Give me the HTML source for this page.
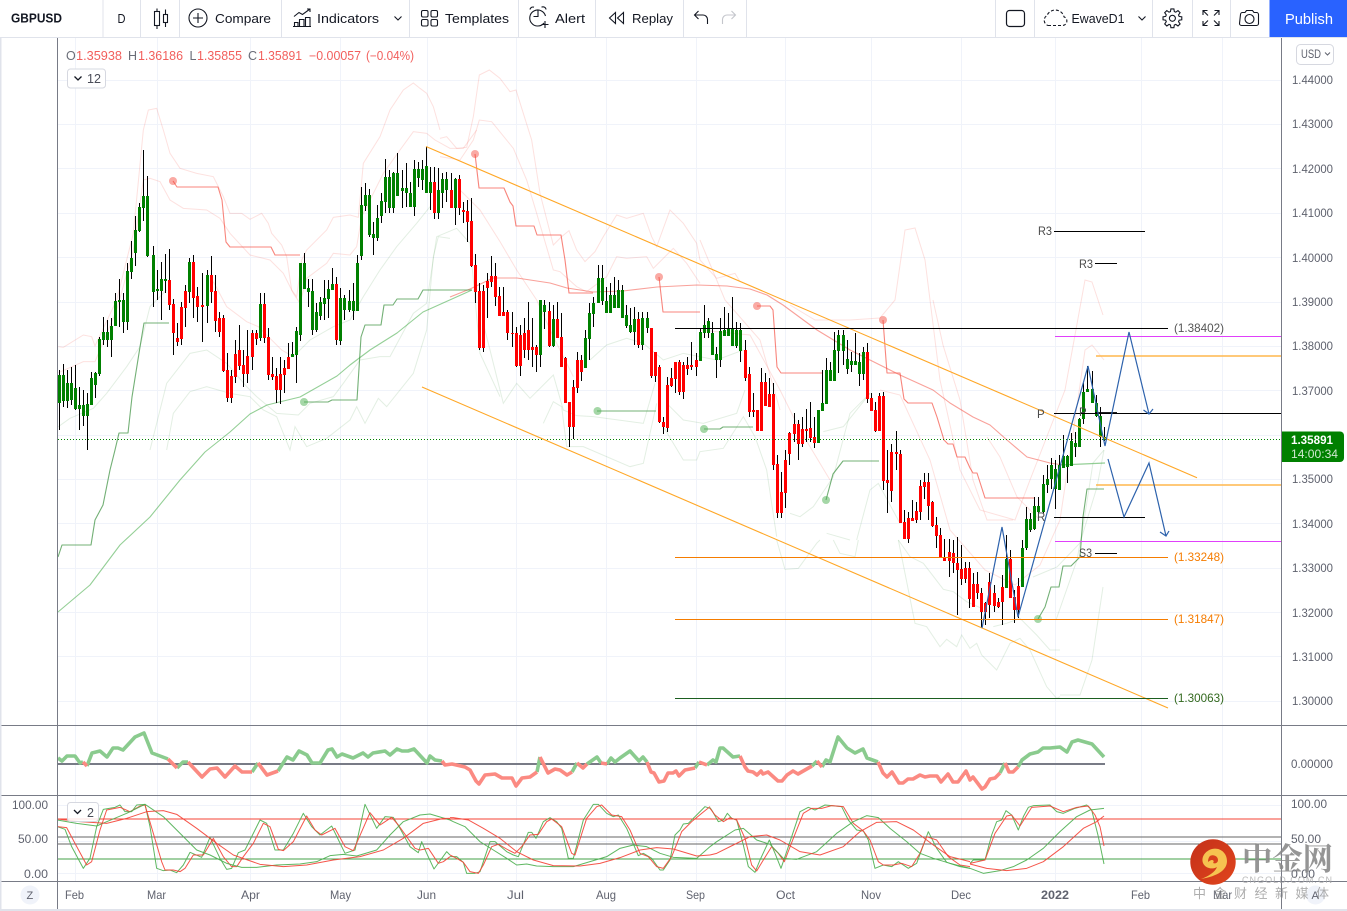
<!DOCTYPE html>
<html><head><meta charset="utf-8"><title>GBPUSD</title>
<style>
html,body{margin:0;padding:0;background:#fff;overflow:hidden}
svg{display:block}
text{font-family:"Liberation Sans","Noto Sans CJK SC",sans-serif}
.pr{fill:none;stroke:#f44336;stroke-opacity:.16;stroke-width:3}
.pg{fill:none;stroke:#388e3c;stroke-opacity:.14;stroke-width:3}
.ax{font-size:12px;fill:#5f626e}
.ic{fill:none;stroke:#131722;stroke-width:1.1}
.tb{font-size:13px;fill:#131722}
</style></head><body>
<svg width="1347" height="911" viewBox="0 0 1347 911" xmlns="http://www.w3.org/2000/svg">
<rect width="1347" height="911" fill="#fff"/>
<!-- grid -->
<path d="M58 80.5H1281M58 124.5H1281M58 168.5H1281M58 213.5H1281M58 257.5H1281M58 302.5H1281M58 346.5H1281M58 390.5H1281M58 435.5H1281M58 479.5H1281M58 523.5H1281M58 568.5H1281M58 612.5H1281M58 656.5H1281M58 701.5H1281M58 805.5H1281M58 841.5H1281M58 873.5H1281M75.5 38V881M157.5 38V881M250.5 38V881M340.5 38V881M427.5 38V881M516.5 38V881M606.5 38V881M696.5 38V881M785.5 38V881M871.5 38V881M961.5 38V881M1055.5 38V881M1141.5 38V881M1222.5 38V881" stroke="#f0f3fa" fill="none"/>
<!-- pale bands -->
<g transform="translate(50 130) scale(.33333)">
<path class="pr" d="M25 650L40 652 100 615 125 620 135 648 200 510 250 310 280 0 295-60 320-65 340 0 360 70 390 115 440 130 490 140 520 200 540 250 575 250 600 268 635 250 655 280 665 310 695 345 710 380 725 480 740 500 755 390 770 360 830 300 850 262 900 255 925 262 940 100 990 20 1020-60 1060-120 1090-141 1110-125 1130-110 1150-70 1170 0"/>
<path class="pr" d="M25 728L100 695 135 695 200 540 250 360 280 150 300 145 330 155 360 210 400 235 470 240 510 265 540 310 600 375 660 390 700 430 730 490 750 520 770 445 830 400 850 370 900 375 920 350 935 260 1000 130 1050 60 1090 5 1130 10 1155 30 1200 55 1240 55 1280 0"/>
<path class="pr" d="M490 455L530 530 590 575 625 590 660 625 695 660 730 680"/>
<path class="pg" d="M25 890L60 865 130 835 170 790 230 710 270 650 300 530 350 480"/>
<path class="pg" d="M730 680L780 630 850 590 900 570 940 500 990 420 1040 350 1100 280 1140 230"/>
<path class="pg" d="M300 960L350 760 420 670 470 660 530 700 590 770 620 800 680 850 745 855 780 820 850 800 880 760 930 690 990 680 1020 680 1090 550 1130 520 1160 320 1220 295 1260 340 1290 670 1350 800"/>
<path class="pg" d="M350 960L370 850 420 785 470 770 540 790 600 800 640 840 680 860 720 960 735 890 770 950 830 925 900 870 920 830 945 880 985 805 1010 830 1090 730 1130 600 1150 380 1165 320 1200 325"/>
</g>
<g transform="translate(440 60) scale(.33333)">
<path class="pr" d="M0 235L20 230 50 265 80 262 100 170 118 45 148 30 180 55 210 95 228 90 275 240 300 400 340 555 365 530 387 512 410 570 435 605 465 575 490 530 530 465 560 475 610 460 635 530 650 560 690 450 730 490 770 550 780 600 830 655 885 640 900 665"/>
<path class="pr" d="M0 290L60 300 100 240 118 180 155 185 220 265 260 360 290 460 340 630 360 635 410 680 440 695 500 650 530 590 560 595 620 590 640 625 700 565 740 610 780 670"/>
<path class="pr" d="M60 390L120 450 180 545 230 630 290 720 340 830 400 950"/>
</g>
<g fill="none" stroke="#f44336" stroke-opacity=".16">
<path d="M700 240L725 300 760 340 780 410"/>
<path d="M700 330L750 335 780 390 800 430 830 480"/>
<path d="M790 305L815 320 850 320 880 318 895 300 905 230 915 228 925 260 940 380 960 470 980 510 1015 520 1030 480 1065 390 1085 280 1092 282 1103 315"/>
<path d="M880 390L900 395 930 460 950 530 985 570 1015 585 1040 565 1060 520 1075 420 1085 350 1092 345 1104 360"/>
<path d="M933 300L943 345 960 400 973 480 987 520 1013 520M987 437L1000 457 1017 497 1040 520"/>
</g>
<g transform="translate(450 250) scale(.33333)">
<path class="pg" d="M100 220L160 460 200 400 240 445 310 375 340 480 380 497 430 500 580 520 615 400"/>
<path class="pg" d="M420 330L470 285 530 265 580 280 640 330 700 310 800 330 880 300"/>
<path class="pg" d="M650 460L700 510 760 520 860 490 885 420"/>
<path class="pg" d="M280 520L310 455 335 470 350 590 400 590 540 650 580 640 620 460"/>
<path class="pg" d="M640 530L700 630 740 630 750 605 820 595 880 500 915 560 950 660 980 860"/>
<path class="pg" d="M1020 790L1050 800 1090 770 1150 680 1200 490 1260 430"/>
<path class="pg" d="M1120 545L1180 530 1260 430"/>
<path class="pg" d="M1130 850L1200 870M1220 870L1260 720 1285 700 1350 820"/>
</g>
<g transform="translate(660 540) scale(.33333)">
<path class="pg" d="M350 0L375 88 415 85 470 10 480 0M520 0L540 40 585 50 595 0"/>
<path class="pg" d="M715 0L750 50 790 70 850 148 880 155 920 185 965 205"/>
<path class="pg" d="M715 0L765 250 800 260 840 320 860 298 890 320 905 285 930 325 950 310 965 345 1010 390 1050 310 1080 295 1110 330 1160 440 1190 475 1200 470"/>
<path class="pg" d="M1000 260L1040 250 1080 235 1130 285 1170 330 1200 330"/>
</g>
<g fill="none" stroke="#388e3c" stroke-opacity=".14">
<path d="M1033 577L1057 567 1080 543 1097 487 1104 450"/>
<path d="M1060 695L1080 695 1092 660 1103 587"/>
<path d="M1056 620L1077 560 1083 527 1093 463 1104 450"/>
</g>
<!-- MA -->
<g fill="none" stroke-linejoin="round">
<path d="M58 612L90 585 120 545 150 517 180 480 205 452 220 440 230 432 250 414 267 405 300 397 337 376 350 365 370 350 397 333 423 312 472 290" stroke="#4caf50" stroke-opacity=".6" stroke-width="1.1"/>
<path d="M450 297L470 289 493 278 517 278 550 283 567 288 593 292 623 291 657 287 697 285 727 286 750 289 767 295 783 305 817 330 850 350 900 375 933 390 950 403 973 417 990 425 1007 440 1027 457 1050 463 1063 465" stroke="#f44336" stroke-opacity=".5" stroke-width="1.1"/>
<path d="M1060 465L1083 464 1105 463" stroke="#4caf50" stroke-opacity=".6" stroke-width="1.2"/>
<!-- step lines -->
<g stroke="#f44336" stroke-opacity=".65" stroke-width="1.1">
<path d="M173 181L177 187 218 187 222 200 226 242 230 247 271 247 275 255 300 255"/>
<path d="M475 154L479 188 504 188 510 202 513 206 516 226 518 226 534 226 537 235 561 235 565 260 569 293 593 293"/>
<path d="M659 277L663 312 700 312"/>
<path d="M757 306L770 306 773 310 777 367 781 373 822 373"/>
<path d="M883 320L887 373 900 373 904 399 908 403 932 403 937 417 944 440 948 444 953 444 957 457 965 457 970 468 973 473 977 473 985 498 1034 498"/>
</g>
<g stroke="#388e3c" stroke-opacity=".7" stroke-width="1.1">
<path d="M58 557L62 545 91 545 95 520 103 505 110 470 115 450 119 433 128 433 132 397 140 347 144 323 169 323"/>
<path d="M304 402L328 402 332 400 357 400 361 337 365 325 381 325 384 305 393 305 397 299 418 299 423 290 472 290"/>
<path d="M597 411H656"/>
<path d="M704 429L720 429 723 427 753 427"/>
<path d="M826 500L833 474 843 461 879 461"/>
<path d="M1038 619L1045 607 1051 587 1059 587 1063 566 1071 566 1080 557 1083 517 1087 489 1104 489"/>
</g>
</g>
<g fill="#f44336" fill-opacity=".45"><circle cx="173" cy="181" r="4"/><circle cx="475" cy="154" r="4"/><circle cx="659" cy="277" r="4"/><circle cx="757" cy="306" r="4"/><circle cx="883" cy="320" r="4"/></g>
<g fill="#4caf50" fill-opacity=".5"><circle cx="304" cy="402" r="4"/><circle cx="597.5" cy="411" r="4"/><circle cx="704" cy="429" r="4"/><circle cx="826" cy="500" r="4"/><circle cx="1038" cy="619" r="4"/></g>
<!-- candles: wicks -->
<path shape-rendering="crispEdges" stroke="#000" fill="none" d="M59.5 370V430M63.5 364V407M67.5 370V408M71.5 367V405M75.5 365V410M79.5 387V430M83.5 390V426M87.5 393V450M91.5 372V405M95.5 372V398M99.5 337V376M103.5 317V345M107.5 320V347M111.5 318V357M115.5 293V326M119.5 279V327M123.5 293V333M127.5 263V330M131.5 241V279M135.5 216V266M139.5 203V232M143.5 150V221M147.5 176V257M153.5 246V307M157.5 270V300M161.5 262V320M165.5 254V293M169.5 249V310M173.5 299V355M177.5 323V346M181.5 302V345M185.5 285V327M189.5 258V303M193.5 255V318M197.5 287V322M202.5 273V342M207.5 270V323M211.5 256V303M215.5 275V332M219.5 312V337M223.5 315V372M227.5 353V402M231.5 370V403M235.5 340V383M239.5 325V370M243.5 350V387M247.5 330V383M252.5 330V370M256.5 330V345M260.5 293V341M264.5 293V343M268.5 328V380M272.5 357V380M276.5 368V403M280.5 357V404M284.5 360V393M288.5 343V369M292.5 342V357M296.5 327V383M300.5 263V341M304.5 253V289M308.5 279V307M312.5 279V335M316.5 303V332M320.5 297V320M324.5 280V320M328.5 280V318M332.5 268V290M336.5 277V345M340.5 288V345M344.5 295V320M349.5 290V312M353.5 283V320M357.5 255V311M361.5 187V260M365.5 183V211M369.5 189V237M373.5 222V255M377.5 205V241M381.5 193V223M385.5 159V213M389.5 170V213M393.5 172V213M397.5 153V196M402.5 170V208M406.5 163V207M410.5 182V207M414.5 160V216M418.5 162V187M422.5 160V190M426.5 147V193M430.5 167V210M434.5 167V219M438.5 168V219M442.5 173V208M446.5 172V202M451.5 173V208M455.5 178V225M459.5 175V215M463.5 202V223M467.5 200V242M471.5 198V267M475.5 254V303M479.5 283V350M483.5 285V352M487.5 273V318M491.5 256V287M495.5 263V306M499.5 287V316M503.5 287V316M507.5 310V340M512.5 312V347M516.5 327V367M520.5 325V376M524.5 318V358M528.5 302V360M532.5 318V367M536.5 345V372M540.5 300V367M544.5 300V329M549.5 302V347M553.5 305V347M557.5 302V338M561.5 313V367M565.5 357V403M569.5 402V447M573.5 380V439M577.5 352V393M581.5 355V381M585.5 330V362M589.5 303V360M593.5 297V327M598.5 265V303M602.5 265V305M606.5 287V313M610.5 283V313M614.5 277V308M618.5 280V308M622.5 285V318M626.5 305V328M630.5 308V333M634.5 307V345M638.5 312V348M642.5 312V350M647.5 312V333M651.5 328V378M655.5 352V382M659.5 365V423M663.5 417V434M667.5 377V432M671.5 368V387M675.5 362V393M679.5 360V395M683.5 362V399M687.5 357V375M691.5 342V370M696.5 353V376M700.5 328V361M704.5 305V338M708.5 318V338M712.5 322V355M716.5 347V378M720.5 318V367M724.5 307V336M728.5 313V335M732.5 297V346M736.5 322V348M740.5 323V362M745.5 340V381M749.5 367V417M753.5 393V417M757.5 410V431M761.5 368V431M765.5 373V406M769.5 378V407M773.5 383V470M777.5 455V518M781.5 472V518M785.5 450V508M789.5 432V465M794.5 413V442M798.5 420V460M802.5 417V447M806.5 409V442M810.5 402V442M814.5 417V448M818.5 410V443M822.5 370V411M826.5 358V404M830.5 362V381M834.5 332V381M838.5 330V373M843.5 330V365M847.5 340V374M851.5 352V372M855.5 333V365M859.5 353V386M863.5 347V380M867.5 343V403M871.5 393V411M875.5 402V432M879.5 393V431M883.5 392V490M887.5 450V513M891.5 444V502M896.5 431V470M900.5 450V523M904.5 510V539M908.5 512V543M912.5 500V520M916.5 502V523M920.5 480V520M924.5 473V499M928.5 473V520M932.5 501V527M936.5 517V548M940.5 528V558M944.5 539V561M949.5 539V577M953.5 540V573M957.5 537V615M961.5 545V585M965.5 562V583M969.5 562V608M973.5 573V607M977.5 572V599M981.5 588V628M985.5 602V625M989.5 573V618M994.5 585V612M998.5 598V608M1002.5 575V625M1006.5 535V588M1010.5 550V598M1014.5 590V623M1018.5 578V618M1022.5 540V587M1026.5 507V550M1030.5 513V532M1034.5 497V530M1038.5 497V513M1043.5 475V513M1047.5 465V493M1051.5 458V489M1055.5 460V509M1059.5 455V490M1063.5 435V468M1067.5 455V483M1071.5 433V466M1075.5 432V457M1079.5 418V447M1083.5 383V424M1087.5 366V392M1092.5 371V403M1096.5 395V417M1100.5 407V447M1104.5 427V441"/>
<!-- green bodies -->
<path shape-rendering="crispEdges" stroke="#008000" stroke-width="3" fill="none" d="M59.5 375V403M63.5 375V401M67.5 383V401M71.5 383V400M75.5 388V409M79.5 405V409M83.5 405V416M87.5 404V416M91.5 378V405M95.5 373V385M99.5 339V374M103.5 332V340M107.5 332V340M111.5 326V340M115.5 301V326M119.5 300V302M123.5 300V322M127.5 271V322M131.5 258V272M135.5 230V253M139.5 207V231M143.5 196V208M147.5 196V256M153.5 255V292M157.5 289V291M161.5 279V291M165.5 279V281M189.5 262V292M207.5 275V306M260.5 304V338M292.5 354V357M296.5 331V355M300.5 263V335M304.5 263V289M308.5 288V292M312.5 291V330M316.5 312V330M320.5 302V316M324.5 298V304M328.5 289V299M332.5 284V290M340.5 298V341M344.5 298V310M349.5 301V310M353.5 301V311M357.5 263V311M361.5 205V256M365.5 195V206M369.5 195V235M373.5 234V238M377.5 218V238M381.5 201V216M385.5 177V202M389.5 177V208M393.5 173V208M397.5 173V196M402.5 188V191M406.5 188V193M410.5 193V207M414.5 169V207M418.5 169V178M422.5 169V180M426.5 166V193M430.5 182V193M438.5 190V213M442.5 179V193M446.5 179V190M455.5 179V208M540.5 300V355M544.5 305V312M553.5 319V346M585.5 338V368M589.5 313V339M593.5 303V314M598.5 278V303M602.5 278V301M606.5 301V313M610.5 295V313M614.5 295V308M618.5 290V308M622.5 290V318M626.5 315V326M630.5 325V332M634.5 319V332M642.5 318V345M647.5 318V328M700.5 332V361M704.5 325V333M708.5 321V333M712.5 333V355M716.5 354V360M720.5 331V360M724.5 330V336M728.5 328V336M732.5 328V346M736.5 330V346M740.5 330V351M818.5 410V443M822.5 403V411M826.5 370V404M830.5 370V381M834.5 350V381M838.5 335V351M843.5 335V351M847.5 359V369M851.5 361V365M855.5 361V365M859.5 362V374M863.5 352V374M1006.5 559V588M1022.5 548V587M1026.5 519V548M1030.5 519V530M1034.5 506V529M1038.5 506V512M1043.5 484V512M1047.5 479V485M1051.5 465V479M1055.5 469V489M1059.5 465V490M1063.5 456V468M1067.5 456V467M1071.5 441V466M1075.5 443V447M1079.5 419V447M1083.5 392V419M1087.5 389V392M1092.5 389V403M1096.5 403V416M1100.5 416V437M1104.5 437V440"/>
<!-- red bodies -->
<path shape-rendering="crispEdges" stroke="#f00" stroke-width="3" fill="none" d="M169.5 280V305M173.5 304V333M177.5 338V342M181.5 307V339M185.5 291V308M193.5 262V298M197.5 296V307M202.5 305V307M211.5 275V292M215.5 291V321M219.5 318V332M223.5 318V371M227.5 370V398M231.5 376V398M235.5 354V377M239.5 350V366M243.5 365V374M247.5 356V374M252.5 333V357M256.5 333V339M264.5 304V338M268.5 337V375M272.5 374V377M276.5 376V390M280.5 374V390M284.5 368V375M288.5 357V369M336.5 284V340M434.5 182V213M451.5 190V208M459.5 179V208M463.5 210V212M467.5 211V222M471.5 221V266M475.5 265V292M479.5 291V348M483.5 291V348M487.5 281V288M491.5 276V282M495.5 276V297M499.5 296V316M503.5 312V316M507.5 312V333M512.5 333V334M516.5 333V366M520.5 335V366M524.5 333V350M528.5 330V350M532.5 347V350M536.5 347V355M549.5 311V346M557.5 319V338M561.5 337V367M565.5 358V403M569.5 402V427M573.5 387V427M577.5 360V388M581.5 360V372M638.5 319V345M651.5 328V376M655.5 352V376M659.5 367V422M663.5 422V427M667.5 385V428M671.5 378V386M675.5 362V379M679.5 362V392M683.5 365V392M687.5 365V369M691.5 365V367M696.5 360V367M745.5 350V378M749.5 374V412M753.5 410V412M757.5 410V431M761.5 382V431M765.5 382V406M769.5 394V407M773.5 394V465M777.5 464V513M781.5 492V513M785.5 460V493M789.5 433V454M794.5 424V434M798.5 424V444M802.5 429V444M806.5 429V431M810.5 428V438M814.5 437V443M867.5 352V399M871.5 398V411M875.5 410V431M879.5 396V431M883.5 396V481M887.5 480V483M891.5 452V491M896.5 452V454M900.5 454V523M904.5 522V539M908.5 518V539M912.5 518V521M916.5 511V520M920.5 486V512M924.5 482V487M928.5 482V506M932.5 502V526M936.5 525V536M940.5 535V558M944.5 557V561M949.5 552V561M953.5 553V563M957.5 563V570M961.5 569V579M965.5 568V579M969.5 568V599M973.5 584V607M977.5 584V593M981.5 593V612M985.5 603V612M989.5 582V605M994.5 593V606M998.5 602V607M1002.5 587V602M1010.5 559V598M1014.5 597V610M1018.5 586V610"/>
<!-- price lines -->
<g fill="none">
<path d="M58 439.5H1281" stroke="#008000" stroke-dasharray="1 2"/>
<path d="M426 146.5L1197 477.7M422 387L1168 708" stroke="#ffa726" stroke-width="1.1"/>
<path d="M675 328.5H1168M1054 413.5H1281M1054 517.5H1145M1054 231.5H1145M1095 263.5H1117M1095 553.5H1117" stroke="#000" stroke-width="1"/>
<path d="M1095 413H1117" stroke="#000" stroke-width="1.8"/>
<path d="M675 557.5H1168M675 619.5H1168" stroke="#f57c00" stroke-width="1"/>
<path d="M675 698.5H1168" stroke="#1b5e20" stroke-width="1"/>
<path d="M1055 336.5H1281M1055 541.5H1281" stroke="#e040fb" stroke-width="1"/>
<path d="M1096 356H1281M1096 485H1281" stroke="#ffb74d" stroke-width="1.4"/>
<path d="M982 628L1002 527 1018 617 1088 366 1105 446 1129 332 1149 414M1143.5 410L1149 414 1153 409M1108 459L1124 517 1149 463 1166 536M1160 532L1166 536 1169 531" stroke="#2d62ac" stroke-width="1.2"/>
</g>
<g font-size="11.5" fill="#4a4a4a">
<text x="1038" y="235" textLength="14" lengthAdjust="spacingAndGlyphs">R3</text>
<text x="1079" y="268" textLength="14" lengthAdjust="spacingAndGlyphs">R3</text>
<text x="1079" y="557" textLength="13" lengthAdjust="spacingAndGlyphs">S3</text>
<text x="1037" y="418">P</text><text x="1079" y="416">P</text><text x="1037" y="521">R</text>
</g>
<g font-size="12">
<text x="1174" y="332" fill="#555" textLength="50" lengthAdjust="spacingAndGlyphs">(1.38402)</text>
<text x="1174" y="561" fill="#f57c00" textLength="50" lengthAdjust="spacingAndGlyphs">(1.33248)</text>
<text x="1174" y="623" fill="#f57c00" textLength="50" lengthAdjust="spacingAndGlyphs">(1.31847)</text>
<text x="1174" y="702" fill="#33691e" textLength="50" lengthAdjust="spacingAndGlyphs">(1.30063)</text>
</g>
<!-- indicator 1 -->
<path d="M58 764H1105" stroke="#787b86" stroke-width="2" fill="none"/>
<g fill="none" stroke-width="3.6" stroke-linejoin="round" stroke-linecap="butt">
<path stroke="#8acb8e" d="M58 758L62 761 67 756 75 756 80 763 83 762M87 766L92 753 100 751 107 757 113 748 118 748 123 750 135 737 144 733 152 753 168 759M177 768L183 762 188 762M252 772L258 763M278 771L287 757 293 760 299 751 307 755 312 763 320 763 328 750 332 749 337 757 342 754 353 758 363 753 368 757 373 753 385 751 390 755 397 749 402 751 408 751 414 749 427 763 430 756 435 760 442 761M537 772L540 757M572 772L577 763M587 764L597 757 601 763M607 764L611 758 615 762 620 758 630 751 639 761 643 757 647 762M695 768L699 762M707 765L713 760 716 762 720 748 723 748 733 757 740 756M812 766L817 761M822 767L826 760 830 762 838 737 847 748 855 753 863 749 867 758 878 762M1000 773L1005 763M1018 767L1022 760 1030 754 1038 752 1043 748 1050 748 1060 747 1067 752 1072 742 1078 740 1092 744 1104 757"/>
<path stroke="#fb8a82" d="M83 762L87 766M168 759L177 768M188 762L202 777 210 769 217 768 225 777 235 766 242 772 252 772M258 763L267 775 278 771M442 761L445 765 452 764 465 767 470 770 476 781 479 784 485 775 495 774 502 778 512 778 516 786 522 778 530 777 537 772M540 757L548 773 555 769 560 770 567 775 572 772M577 763L583 768 587 764M601 763L607 764M647 762L651 772 654 773 659 782 664 781 668 773 673 773 676 771 679 776 685 770 695 768M699 762L707 765M740 756L745 767 748 771 753 772 757 775 761 771 763 774 768 772 778 781 782 781 787 775 793 771 798 774 812 766M817 761L822 767M878 762L883 773 887 777 892 772 899 783 903 783 908 779 913 779 920 775 925 777 930 776 937 776 941 782 948 774 953 782 958 782 966 771 970 780 973 777 982 789 985 787 990 779 995 778 1000 773M1005 763L1009 772 1013 772 1018 767"/>
</g>
<!-- indicator 2 lines -->
<path d="M58 819H1281" stroke="#f44336" fill="none" stroke-width="1.1"/>
<path d="M58 837H1281M58 844H1281" stroke="#666" fill="none" stroke-width="1"/>
<path d="M58 859H1281" stroke="#43a047" fill="none" stroke-width="1"/>
<g fill="none" stroke-linejoin="round" stroke-opacity=".9">
<g transform="translate(0 720) scale(.33333)" stroke-width="3">
<path stroke="#4caf50" d="M172 320L195 328 215 380 250 445 270 415 290 320 310 268 345 262 360 255 375 275 395 275 410 255 435 253 450 320 470 445 490 452 510 450 530 458 550 435 570 397 605 412 630 352 660 415 680 448 695 445 715 398 735 390 780 300 800 310 825 390 850 390 880 340 910 280 935 320 960 345 995 318 1035 400 1065 390 1095 253 1130 325 1155 290 1180 292 1200 325 1230 380 1255 398 1265 365 1280 400 1302 447 1340 395 1350 405"/>
<path stroke="#f44336" d="M172 320L200 323 225 370 260 435 275 425 300 330 320 270 360 262 390 275 420 258 435 255 460 340 485 425 495 450 520 450 540 455 555 445 580 405 610 405 640 355 670 410 695 440 710 440 730 410 760 370 790 310 810 320 835 388 850 392 880 365 920 288 945 330 965 345 1005 325 1035 380 1060 392 1110 278 1140 315 1175 292 1195 315 1245 385 1260 390 1285 385 1315 430 1330 425 1350 410"/>
<path stroke="#4caf50" d="M172 300L230 310 290 318 320 305 380 280 435 253 490 290 550 350 590 390 630 405 680 430 725 442 770 442 830 435 900 432 950 425 990 407 1030 403 1070 408 1130 390 1170 345 1210 305 1260 285 1290 282 1350 300"/>
<path stroke="#f44336" d="M172 297L240 305 320 310 380 295 440 275 490 272 530 283 590 325 650 370 700 405 780 433 850 440 920 435 1000 420 1080 410 1150 390 1210 355 1270 310 1330 295 1350 295"/>
</g>
<g transform="translate(440 725) scale(.33333)" stroke-width="3">
<path stroke="#4caf50" d="M30 395L50 395 70 412 80 445 105 445 120 440 150 350 165 350 200 380 220 390 235 395 265 322 275 322 288 340 310 290 330 278 350 290 365 310 385 400 400 400 430 285 460 238 475 238 500 265 520 275 535 270 560 310 595 392 610 385 635 400 660 435 670 435 690 405 705 330 720 315 730 297 745 295 770 270 795 245 810 250"/>
<path stroke="#f44336" d="M30 390L50 400 70 412 90 440 115 445 130 420 155 365 175 358 205 375 225 385 245 365 270 330 295 328 320 290 335 282 365 305 395 385 405 390 440 280 470 245 485 240 515 270 545 275 570 315 600 385 625 395 650 425 670 430 695 395 725 320 755 290 785 265 810 245"/>
<path stroke="#4caf50" d="M30 285L40 290 75 305 120 350 160 375 200 400 230 420 260 417 290 423 340 425 400 425 450 410 500 395 540 370 580 360 620 365 660 385 700 397 770 400 810 365"/>
<path stroke="#f44336" d="M30 278L40 278 85 285 130 310 180 340 230 380 280 405 340 422 420 423 480 415 540 398 600 375 650 368 700 372 770 393 810 390"/>
</g>
<g transform="translate(700 725) scale(.33333)" stroke-width="3">
<path stroke="#4caf50" d="M30 248L35 255 55 290 70 285 82 265 95 280 110 285 130 360 145 425 165 442 180 405 208 345 225 385 243 430 260 380 300 260 325 247 345 255 375 240 425 245 445 285 470 315 490 318 505 345 525 430 550 420 575 425 595 410 625 430 650 415 685 320 710 370 740 412 780 425 810 430"/>
<path stroke="#f44336" d="M30 250L45 270 70 290 90 278 110 285 135 340 155 420 170 438 190 405 215 365 235 385 253 410 280 340 310 265 335 250 365 250 395 242 430 245 460 295 490 318 510 345 535 410 550 420 580 420 605 415 635 425 660 385 680 335 710 345 745 395 780 420 810 425"/>
<path stroke="#4caf50" d="M30 365L50 350 105 315 130 310 170 345 210 358 250 400 290 403 350 380 410 325 460 290 500 272 535 278 570 310 620 350 660 385 700 400 750 415 810 430"/>
<path stroke="#f44336" d="M30 390L50 385 100 360 150 335 200 330 240 345 300 380 360 390 430 365 480 320 530 292 590 290 640 315 700 360 750 395 810 410"/>
</g>
<g transform="translate(950 720) scale(.33333)" stroke-width="3">
<path stroke="#4caf50" d="M60 430L70 420 105 420 125 345 140 305 155 300 168 272 185 285 205 330 220 290 235 262 250 257 300 255 320 275 340 280 375 265 410 255 425 270 445 350 462 432"/>
<path stroke="#f44336" d="M60 430L105 420 135 340 170 288 185 285 210 318 245 262 300 258 340 275 380 262 415 258 435 285 450 320 462 378"/>
<path stroke="#4caf50" d="M60 445L100 460 150 452 190 440 230 420 280 385 330 335 380 290 420 270 462 265"/>
<path stroke="#f44336" d="M60 432L110 445 170 452 230 445 280 425 340 380 400 325 440 305 462 288"/>
</g>
</g>
<!-- frame -->
<rect x="1282" y="38" width="65" height="871" fill="#fff"/>
<rect x="0" y="38" width="57" height="871" fill="#fff"/>
<rect x="0" y="882" width="1347" height="27" fill="#fff"/>
<rect x="0" y="38" width="1.5" height="873" fill="#e0e3eb"/>
<rect x="0" y="909" width="1347" height="2" fill="#e0e3eb"/>
<path d="M1.5 725.5H1347M1.5 795.5H1347M1.5 881.5H1347M57.5 38V909M1281.5 38V909" stroke="#787b86" fill="none"/>
<!-- price axis -->
<g class="ax">
<text x="1292" y="84" textLength="41" lengthAdjust="spacingAndGlyphs">1.44000</text>
<text x="1292" y="128" textLength="41" lengthAdjust="spacingAndGlyphs">1.43000</text>
<text x="1292" y="173" textLength="41" lengthAdjust="spacingAndGlyphs">1.42000</text>
<text x="1292" y="217" textLength="41" lengthAdjust="spacingAndGlyphs">1.41000</text>
<text x="1292" y="262" textLength="41" lengthAdjust="spacingAndGlyphs">1.40000</text>
<text x="1292" y="306" textLength="41" lengthAdjust="spacingAndGlyphs">1.39000</text>
<text x="1292" y="350" textLength="41" lengthAdjust="spacingAndGlyphs">1.38000</text>
<text x="1292" y="395" textLength="41" lengthAdjust="spacingAndGlyphs">1.37000</text>
<text x="1292" y="483" textLength="41" lengthAdjust="spacingAndGlyphs">1.35000</text>
<text x="1292" y="528" textLength="41" lengthAdjust="spacingAndGlyphs">1.34000</text>
<text x="1292" y="572" textLength="41" lengthAdjust="spacingAndGlyphs">1.33000</text>
<text x="1292" y="617" textLength="41" lengthAdjust="spacingAndGlyphs">1.32000</text>
<text x="1292" y="661" textLength="41" lengthAdjust="spacingAndGlyphs">1.31000</text>
<text x="1292" y="705" textLength="41" lengthAdjust="spacingAndGlyphs">1.30000</text>
<text x="1291" y="768" textLength="42" lengthAdjust="spacingAndGlyphs">0.00000</text>
<text x="1291" y="808" textLength="36" lengthAdjust="spacingAndGlyphs">100.00</text>
<text x="1291" y="843" textLength="30" lengthAdjust="spacingAndGlyphs">50.00</text>
<text x="1291" y="878" textLength="24" lengthAdjust="spacingAndGlyphs">0.00</text>
<text x="12" y="809" textLength="36" lengthAdjust="spacingAndGlyphs">100.00</text>
<text x="18" y="843" textLength="30" lengthAdjust="spacingAndGlyphs">50.00</text>
<text x="24" y="878" textLength="24" lengthAdjust="spacingAndGlyphs">0.00</text>
</g>
<path d="M1283 431.5H1340a4 4 0 0 1 4 4V458a4 4 0 0 1-4 4H1282V431.5z" fill="#008000"/>
<text x="1291" y="444" font-size="12" font-weight="bold" fill="#fff" textLength="42" lengthAdjust="spacingAndGlyphs">1.35891</text>
<text x="1291" y="458" font-size="12" fill="#cfe8cf" textLength="47" lengthAdjust="spacingAndGlyphs">14:00:34</text>
<rect x="1296.5" y="44.5" width="37" height="20" rx="4" fill="#fff" stroke="#d6d8e0"/>
<text x="1301" y="58" font-size="11.5" fill="#5f626e" textLength="20" lengthAdjust="spacingAndGlyphs">USD</text>
<path d="M1325 52.5l2.5 2.5 2.5-2.5" fill="none" stroke="#5f626e"/>
<!-- time axis -->
<g class="ax">
<text x="65" y="899" textLength="19" lengthAdjust="spacingAndGlyphs">Feb</text>
<text x="147" y="899" textLength="19" lengthAdjust="spacingAndGlyphs">Mar</text>
<text x="241" y="899" textLength="19" lengthAdjust="spacingAndGlyphs">Apr</text>
<text x="330" y="899" textLength="21" lengthAdjust="spacingAndGlyphs">May</text>
<text x="417" y="899" textLength="19" lengthAdjust="spacingAndGlyphs">Jun</text>
<text x="507" y="899" textLength="17" lengthAdjust="spacingAndGlyphs">Jul</text>
<text x="596" y="899" textLength="20" lengthAdjust="spacingAndGlyphs">Aug</text>
<text x="686" y="899" textLength="19" lengthAdjust="spacingAndGlyphs">Sep</text>
<text x="776" y="899" textLength="19" lengthAdjust="spacingAndGlyphs">Oct</text>
<text x="861" y="899" textLength="20" lengthAdjust="spacingAndGlyphs">Nov</text>
<text x="951" y="899" textLength="20" lengthAdjust="spacingAndGlyphs">Dec</text>
<text x="1041" y="899" font-weight="bold" textLength="28" lengthAdjust="spacingAndGlyphs">2022</text>
<text x="1131" y="899" textLength="19" lengthAdjust="spacingAndGlyphs">Feb</text>
<text x="1213" y="899" textLength="19" lengthAdjust="spacingAndGlyphs">Mar</text>
</g>
<circle cx="30" cy="895" r="9.5" fill="#f0f3fa"/><text x="26.5" y="899" font-size="11" fill="#5f626e">Z</text>
<circle cx="1315.5" cy="895" r="9.5" fill="#f0f3fa"/><text x="1311.5" y="899" font-size="11" fill="#5f626e">A</text>
<!-- legend -->
<g font-size="12.5">
<text x="66" y="60" fill="#6a6d78">O</text><text x="76" y="60" fill="#f25f5c" textLength="46" lengthAdjust="spacingAndGlyphs">1.35938</text>
<text x="128" y="60" fill="#6a6d78">H</text><text x="138" y="60" fill="#f25f5c" textLength="45" lengthAdjust="spacingAndGlyphs">1.36186</text>
<text x="189.5" y="60" fill="#6a6d78">L</text><text x="197" y="60" fill="#f25f5c" textLength="45" lengthAdjust="spacingAndGlyphs">1.35855</text>
<text x="248" y="60" fill="#6a6d78">C</text><text x="258" y="60" fill="#f25f5c" textLength="44" lengthAdjust="spacingAndGlyphs">1.35891</text>
<text x="309" y="60" fill="#f25f5c" textLength="52" lengthAdjust="spacingAndGlyphs">−0.00057</text>
<text x="366" y="60" fill="#f25f5c" textLength="48" lengthAdjust="spacingAndGlyphs">(−0.04%)</text>
</g>
<rect x="67.5" y="69" width="38" height="19" rx="3" fill="#fff" stroke="#d6d8e0"/>
<path d="M74.5 76.5l3.5 3.5 3.5-3.5" fill="none" stroke="#131722" stroke-width="1.3"/>
<text x="87" y="83" font-size="12.5" fill="#4a4d58" textLength="14" lengthAdjust="spacingAndGlyphs">12</text>
<rect x="67.5" y="802.5" width="31" height="19" rx="3" fill="#fff" fill-opacity=".85" stroke="#d6d8e0"/>
<path d="M74 810l3.5 3.5 3.5-3.5" fill="none" stroke="#131722" stroke-width="1.3"/>
<text x="87" y="817" font-size="12.5" fill="#4a4d58">2</text>
<!-- top bar -->
<rect x="0" y="0" width="1347" height="37" fill="#fff"/>
<path d="M0 37.5H1347" stroke="#e0e3eb" fill="none"/>
<path d="M103 0V37M140.5 0V37M179.5 0V37M281.5 0V37M409.5 0V37M518.5 0V37M595.5 0V37M683.5 0V37M746.5 0V37M995.5 0V37M1034.5 0V37M1152.5 0V37M1192.5 0V37M1230.5 0V37" stroke="#e0e3eb" fill="none"/>
<text x="11" y="22.5" font-size="12.5" font-weight="bold" fill="#131722" textLength="51" lengthAdjust="spacingAndGlyphs">GBPUSD</text>
<text x="117.5" y="23" font-size="13" fill="#131722" textLength="8" lengthAdjust="spacingAndGlyphs">D</text>
<g class="ic">
<rect x="154.5" y="11.5" width="5" height="14"/><path d="M157 8.5V11.5M157 25.5V29M165.5 9.5V14.5M165.5 22.5V27"/><rect x="163.5" y="14.5" width="4" height="8"/>
<circle cx="198" cy="18" r="9"/><path d="M193 18H203M198 13V23"/>
<path d="M294 16.5L299 12.5 302.5 14.5 310 9M307 9H310V12"/>
<path d="M294.5 22.5H298V26.5H294.5zM299.5 19.5H304V26.5H299.5zM305.5 17.5H310V26.5H305.5zM293 26.5H311"/>
<rect x="421.5" y="10.5" width="6.5" height="6.5" rx="1.5"/><rect x="431" y="10.5" width="6.5" height="6.5" rx="1.5"/><rect x="421.5" y="19.5" width="6.5" height="6.5" rx="1.5"/><rect x="431" y="19.5" width="6.5" height="6.5" rx="1.5"/>
<path d="M544 23A8 8 0 1 1 545.5 16M538 10V16.5H533.5M530 9.5A3 3 0 0 1 534 7.2M541.5 7.2A3 3 0 0 1 546 9.5M545 21V28M541.5 24.5H548.5"/>
<path d="M615.5 12.5L609.5 18 615.5 23.5zM623.5 12.5L617.5 18 623.5 23.5z"/>
<path d="M698.5 11L694.5 15 698.5 19M695 15H703A4.5 4.5 0 0 1 707.5 19.5V24"/>
<rect x="1006.5" y="10.5" width="18" height="16" rx="3" stroke-width="1.2"/>
<path d="M1048 25.5h14.5a4.5 4.5 0 0 0 1.5-8.7 a9 9 0 0 0-17-1.3 a5.5 5.5 0 0 0 1 10z" stroke-dasharray="3 2"/>
<path transform="translate(1172.4 18.3)" d="M-1.93-6.73L-1.49-9.38 1.49-9.38 1.93-6.73 3.39-6.12 5.58-7.69 7.69-5.58 6.12-3.39 6.73-1.93 9.38-1.49 9.38 1.49 6.73 1.93 6.12 3.39 7.69 5.58 5.58 7.69 3.39 6.12 1.93 6.73 1.49 9.38-1.49 9.38-1.93 6.73-3.39 6.12-5.58 7.69-7.69 5.58-6.12 3.39-6.73 1.93-9.38 1.49-9.38-1.49-6.73-1.93-6.12-3.39-7.69-5.58-5.58-7.69-3.39-6.12z"/>
<circle cx="1172.4" cy="18.3" r="3"/>
<path d="M1203 15V10.5H1207.5M1203.5 11L1208 15.5M1219 15V10.5H1214.5M1218.5 11L1214 15.5M1203 21V25.5H1207.5M1203.5 25L1208 20.5M1219 21V25.5H1214.5M1218.5 25L1214 20.5"/>
<path d="M1240.5 14.5a2 2 0 0 1 2-2h2.5l1.5-2h6l1.500 2h2.500a2 2 0 0 1 2 2v9a2 2 0 0 1-2 2h-15a2 2 0 0 1-2-2z"/>
<circle cx="1249.500" cy="19" r="4.500"/>
</g>
<path d="M394.5 16.500l3.500 3.500 3.500-3.500M1138.500 16.500l3.500 3.500 3.500-3.500" fill="none" stroke="#131722" stroke-width="1.100"/>
<path d="M722.5 24V19.500A4.500 4.500 0 0 1 727 15H735.500M731.500 11L735.500 15 731.500 19" fill="none" stroke="#c4c6cc" stroke-width="1.100"/>
<text class="tb" x="215" y="23" textLength="56" lengthAdjust="spacingAndGlyphs">Compare</text>
<text class="tb" x="317" y="23" textLength="62" lengthAdjust="spacingAndGlyphs">Indicators</text>
<text class="tb" x="445" y="23" textLength="64" lengthAdjust="spacingAndGlyphs">Templates</text>
<text class="tb" x="555" y="23" textLength="30" lengthAdjust="spacingAndGlyphs">Alert</text>
<text class="tb" x="632" y="23" textLength="41" lengthAdjust="spacingAndGlyphs">Replay</text>
<text class="tb" x="1071.500" y="23" textLength="53" lengthAdjust="spacingAndGlyphs">EwaveD1</text>
<rect x="1269.500" y="0" width="77.500" height="37" fill="#2962ff"/>
<text x="1285" y="24" font-size="14.500" fill="#fff" textLength="48" lengthAdjust="spacingAndGlyphs">Publish</text>
<!-- watermark -->
<defs><linearGradient id="lg" x1="0" y1="0" x2="1" y2="1"><stop offset="0" stop-color="#c4301a"/><stop offset="1" stop-color="#e0451c"/></linearGradient></defs>
<circle cx="1213" cy="862" r="22.700" fill="url(#lg)"/>
<path d="M1212 849c8-2 15 4 15 12 0 9-9 15-26 18 8-3 14-7 16-12-5 3-12 1-14-4-2-6 2-12 9-14z" fill="#f6c350"/>
<path d="M1210 856c3-2 8 0 8 4 0 3-3 4-5 3 1-1 1-3-1-3-1 0-3 1-4 2 0-3 1-5 2-6z" fill="#d8401c"/>
<text x="1242" y="870" font-size="31" font-weight="bold" fill="#8a8a8a" fill-opacity=".9" style="font-family:'Noto Serif CJK SC','Noto Sans CJK SC',serif" textLength="91" lengthAdjust="spacingAndGlyphs">中金网</text>
<text x="1242" y="883" font-size="9" fill="#a8a8a8" fill-opacity=".8" textLength="90">CNGOLD.COM.CN</text>
<text x="1193" y="898" font-size="13" fill="#8a8a8a" fill-opacity=".7" textLength="136">中金财经新媒体</text>
</svg>
</body></html>
